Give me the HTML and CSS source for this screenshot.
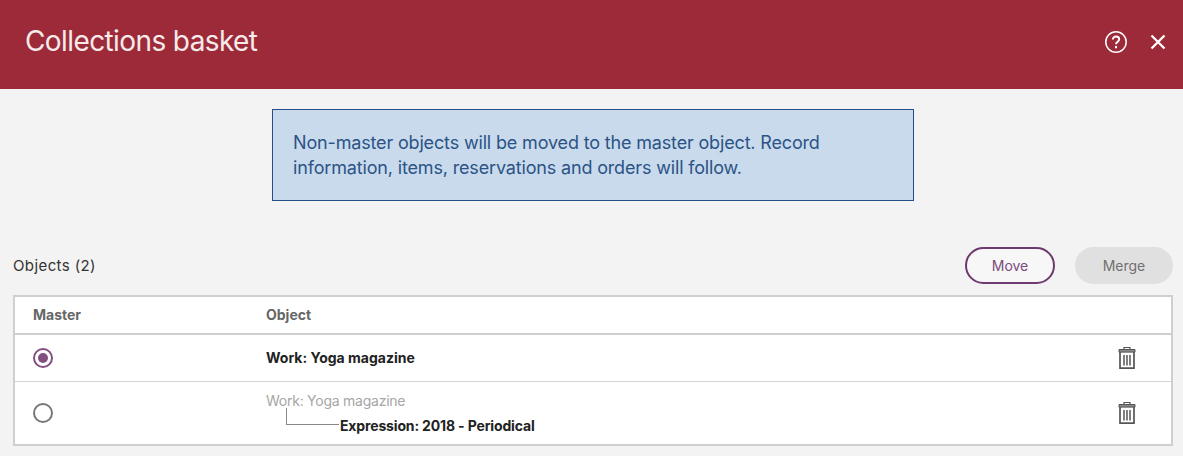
FILE: index.html
```html
<!DOCTYPE html>
<html lang="en">
<head>
<meta charset="utf-8">
<title>Collections basket</title>
<link rel="stylesheet" href="styles.css">
</head>
<body>
<header class="header">
  <h1 class="title">Collections basket</h1>
  <div class="header-actions">
    <svg class="icon-help" width="24" height="24" viewBox="0 0 24 24" fill="none" stroke="#fff" aria-hidden="true">
      <circle cx="12" cy="12" r="10.2" stroke-width="1.5"/>
      <path d="M8.8 9.6c0-1.9 1.4-3.1 3.2-3.1s3.2 1.1 3.2 2.8c0 2.5-3.2 2.4-3.2 5" stroke-width="1.9"/>
      <path d="M12 16v2.2" stroke-width="2"/>
    </svg>
    <svg class="icon-close" width="16" height="16" viewBox="0 0 16 16" fill="none" stroke="#fff" stroke-width="2.3" aria-hidden="true">
      <path d="M1.5 1.5l13 13M14.5 1.5l-13 13"/>
    </svg>
  </div>
</header>
<main class="content">
  <div class="notice">Non-master objects will be moved to the master object. Record information, items, reservations and orders will follow.</div>
  <div class="toolbar">
    <span class="count">Objects (2)</span>
    <div class="buttons">
      <button class="btn btn-outline">Move</button>
      <button class="btn btn-disabled">Merge</button>
    </div>
  </div>
  <div class="table">
    <div class="row row-head">
      <div class="col-master">Master</div>
      <div class="col-object">Object</div>
    </div>
    <div class="row row-first">
      <div class="col-master"><span class="radio radio-on"></span></div>
      <div class="col-object col-work"><strong>Work: Yoga magazine</strong></div>
      <div class="col-action">
        <svg width="20" height="24" viewBox="0 0 20 24" fill="none" stroke="#555" aria-hidden="true">
          <path d="M7 3.5V1.5h6v2" stroke-width="1.2"/>
          <path d="M2 3.5h16v2.6H2z" fill="#888" stroke-width="1"/>
          <path d="M3 6v16.2h14V6" stroke-width="1.7"/>
          <path d="M7 9v10.5M10 9v10.5M13 9v10.5" stroke-width="1.5"/>
        </svg>
      </div>
    </div>
    <div class="row row-second">
      <div class="col-master"><span class="radio"></span></div>
      <div class="col-object">
        <div class="parent">Work: Yoga magazine</div>
        <div class="child"><span class="connector"></span><strong>Expression: 2018 - Periodical</strong></div>
      </div>
      <div class="col-action">
        <svg width="20" height="24" viewBox="0 0 20 24" fill="none" stroke="#555" aria-hidden="true">
          <path d="M7 3.5V1.5h6v2" stroke-width="1.2"/>
          <path d="M2 3.5h16v2.6H2z" fill="#888" stroke-width="1"/>
          <path d="M3 6v16.2h14V6" stroke-width="1.7"/>
          <path d="M7 9v10.5M10 9v10.5M13 9v10.5" stroke-width="1.5"/>
        </svg>
      </div>
    </div>
  </div>
</main>
</body>
</html>
```
FILE: styles.css
```css
* { box-sizing: border-box; }
html, body { margin: 0; height: 100%; }
body {
  background: #f3f3f3;
  color: #222;
  font-family: "Inter", "Liberation Sans", sans-serif;
  overflow: hidden;
}
.header {
  height: 89px;
  background: #9c2a38;
  color: #f6eaea;
  display: flex;
  align-items: center;
  justify-content: space-between;
  padding: 0 17px 8px 25px;
}
.title { margin: 0; font-size: 28px; font-weight: 400; letter-spacing: -0.6px; }
.header-actions { display: flex; align-items: center; gap: 22px; padding-top: 2px; }
.content { padding: 20px 10px 0 13px; }
.notice {
  width: 642px;
  height: 92px;
  margin: 0 auto;
  padding: 20px;
  background: #c9daed;
  border: 1px solid #254f87;
  color: #2c5385;
  font-size: 18px;
  line-height: 25px;
  letter-spacing: -0.16px;
}
.toolbar {
  display: flex;
  align-items: center;
  justify-content: space-between;
  margin-top: 46px;
  height: 37px;
}
.count { font-size: 15px; color: #333; letter-spacing: 0.4px; }
.buttons { display: flex; gap: 20px; }
.btn {
  width: 90px;
  height: 37px;
  border-radius: 19px;
  font: inherit;
  font-size: 14px;
  padding: 0;
}
.btn-outline { background: #f7f7f7; border: 2px solid #6d3a6f; color: #7b4a7d; }
.btn-disabled { width: 98px; background: #e0e0e0; border: 0; color: #707070; }
.table {
  margin-top: 11px;
  background: #fff;
  border: 2px solid #cfcfcf;
  height: 151px;
  display: flex;
  flex-direction: column;
  font-size: 14px;
}
.row { display: flex; align-items: center; padding-left: 18px; }
.row-head { height: 38px; border-bottom: 2px solid #cfcfcf; padding-bottom: 2px; font-weight: 700; color: #666; }
.row-first { height: 47px; border-bottom: 1px solid #d4d4d4; color: #222; }
.row-second { flex: 1; }
.col-master { width: 233px; display: flex; }
.col-object { flex: 1; }
.col-work { padding-bottom: 2px; }
.col-action { width: 54px; display: flex; }
.radio {
  width: 20px;
  height: 20px;
  border: 2px solid #777;
  border-radius: 50%;
  background: #fff;
  display: block;
}
.radio-on { border-color: #834f81; position: relative; }
.radio-on::after {
  content: "";
  position: absolute;
  inset: 3px;
  border-radius: 50%;
  background: #834f81;
}
.parent { color: #a6a6a6; line-height: 20px; letter-spacing: -0.25px; }
.child { display: flex; align-items: flex-start; line-height: 20px; margin-top: 5px; color: #222; letter-spacing: -0.15px; }
.connector {
  width: 53px;
  height: 17px;
  margin: -8px 1px 0 20px;
  border-left: 1px solid #888;
  border-bottom: 1px solid #888;
  flex: none;
}
```
